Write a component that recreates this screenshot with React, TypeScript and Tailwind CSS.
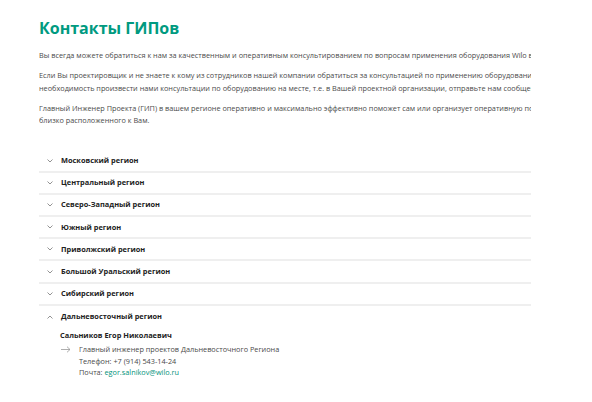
import React from 'react';

const regions = [
  'Московский регион',
  'Центральный регион',
  'Северо-Западный регион',
  'Южный регион',
  'Приволжский регион',
  'Большой Уральский регион',
  'Сибирский регион',
];

const Chevron: React.FC<{ up?: boolean }> = ({ up }) => (
  <svg width="6" height="4" viewBox="0 0 6 4" className="shrink-0">
    <polyline
      points={up ? '0.5,3.5 3,1 5.5,3.5' : '0.5,0.5 3,3 5.5,0.5'}
      fill="none"
      stroke="#777"
      strokeWidth="0.8"
    />
  </svg>
);

const App: React.FC = () => {
  return (
    <div className="w-[592px] h-[402px] bg-white font-['Open_Sans',sans-serif] overflow-hidden">
      <div className="ml-[39px] w-[492px] overflow-hidden pt-[18px]">
        {/* Title */}
        <h1 className="text-[16px] leading-[20px] font-bold text-[#009a80] whitespace-nowrap">
          Контакты ГИПов
        </h1>

        {/* Intro text */}
        <div className="mt-[11px] text-[7.3px] leading-[12.5px] text-[#4a4a4a] whitespace-nowrap">
          <p>
            Вы всегда можете обратиться к нам за качественным и оперативным консультированием по вопросам применения оборудования Wilo в проектах.
          </p>
          <p className="mt-[7.5px]">
            Если Вы проектировщик и не знаете к кому из сотрудников нашей компании обратиться за консультацией по применению оборудования Wilo, или есть
          </p>
          <p>
            необходимость произвести нами консультации по оборудованию на месте, т.е. в Вашей проектной организации, отправьте нам сообщение.
          </p>
          <p className="mt-[7.5px]">
            Главный Инженер Проекта (ГИП) в вашем регионе оперативно и максимально эффективно поможет сам или организует оперативную помощь специалиста,
          </p>
          <p>близко расположенного к Вам.</p>
        </div>

        {/* Regions accordion */}
        <div className="mt-[24px]">
          {regions.map((r) => (
            <div
              key={r}
              className="h-[22.2px] flex items-center gap-[8px] pl-[8px] border-b-2 border-[#efefef]"
            >
              <Chevron />
              <span className="text-[7.4px] font-bold text-[#222]">{r}</span>
            </div>
          ))}
          <div className="h-[22.2px] flex items-center gap-[8px] pl-[8px]">
            <Chevron up />
            <span className="text-[7.4px] font-bold text-[#222]">Дальневосточный регион</span>
          </div>

          <div className="pl-[21px] pt-[1px]">
            <div className="text-[7.4px] leading-[12px] font-bold text-[#222]">
              Сальников Егор Николаевич
            </div>
            <div className="flex mt-[3px]">
              <div className="w-[19px] pt-[2px] pl-[1px]">
                <svg width="10" height="7" viewBox="0 0 10 7">
                  <path d="M0 3.5 H9 M6 0.7 L9 3.5 L6 6.3" fill="none" stroke="#999" strokeWidth="0.8" />
                </svg>
              </div>
              <div className="text-[7.3px] leading-[11.5px] text-[#4a4a4a]">
                <div>Главный инженер проектов Дальневосточного Региона</div>
                <div>Телефон: +7 (914) 543-14-24</div>
                <div>
                  Почта: <span className="text-[#00927a]">egor.salnikov@wilo.ru</span>
                </div>
              </div>
            </div>
          </div>
        </div>
      </div>
    </div>
  );
};

export default App;
